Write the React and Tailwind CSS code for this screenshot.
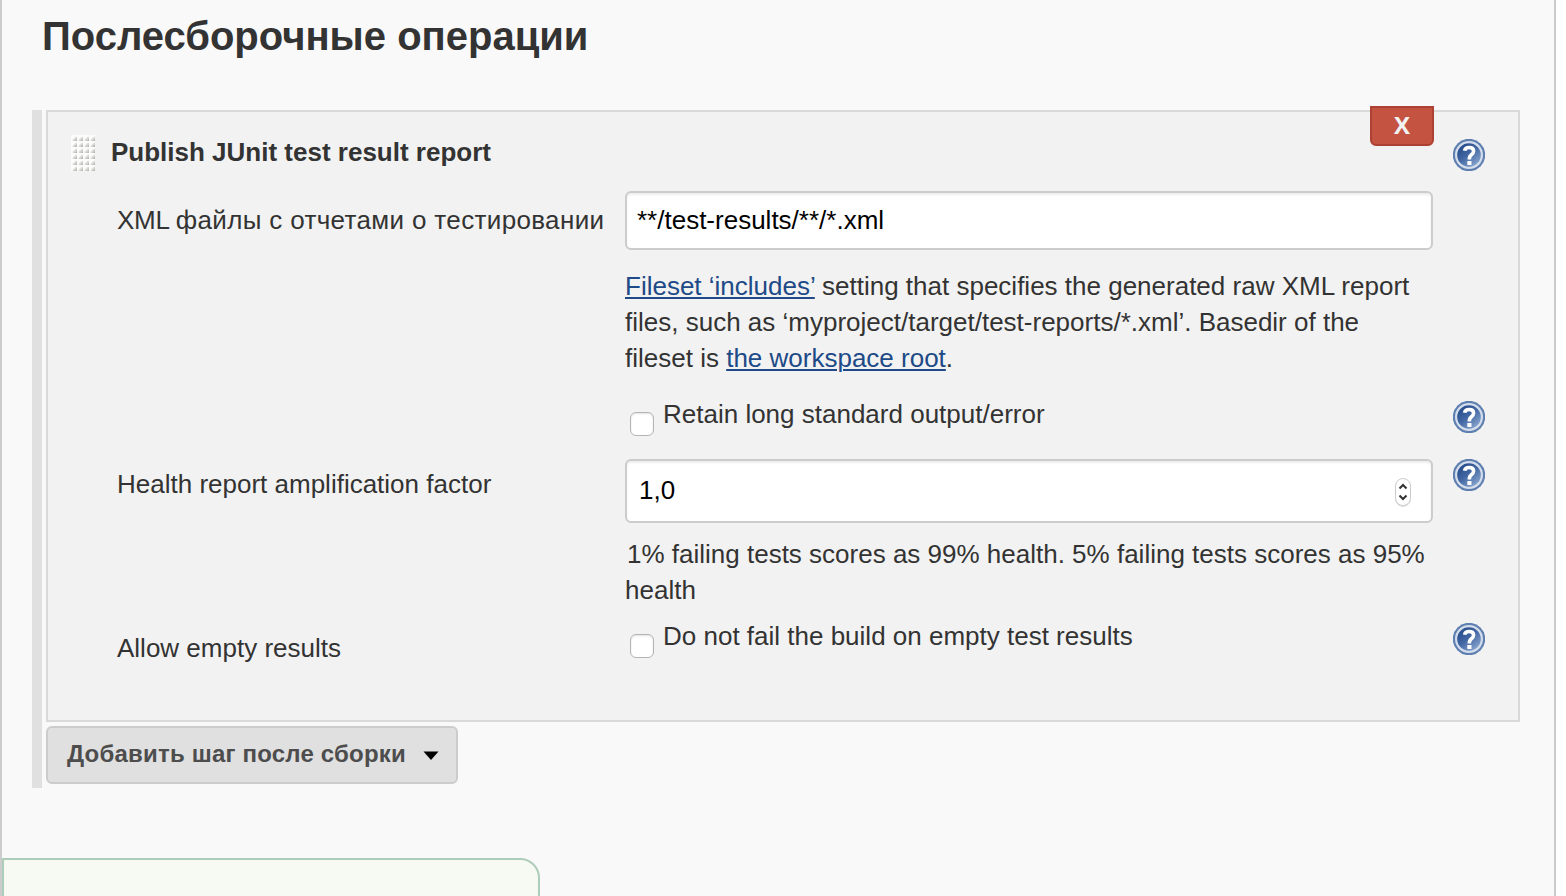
function HelpIcon({ className = "" }) {
  return (
    <svg viewBox="0 0 32 32" className={`block size-8 shrink-0 ${className}`} role="img" aria-label="?">
      <defs>
        <linearGradient id="helpFill" x1="0.15" y1="0.1" x2="0.85" y2="0.95">
          <stop offset="0" stopColor="#264a8a" />
          <stop offset="0.45" stopColor="#4267a3" />
          <stop offset="1" stopColor="#92add3" />
        </linearGradient>
      </defs>
      <circle cx="16" cy="16" r="16.2" fill="#5f7fb0" />
      <circle cx="16" cy="16" r="12.9" fill="url(#helpFill)" stroke="#d3ddeb" strokeWidth="2.2" />
      <path d="M11.6 11.8c.3-2.2 2.1-3.3 4.5-3.3 2.7 0 4.5 1.4 4.5 3.6 0 1.8-.9 2.7-2.2 3.7-1.5 1.1-2.1 2-2.1 4.6" fill="none" stroke="#fff" strokeWidth="3.6" />
      <rect x="14.3" y="22" width="4.2" height="4" rx=".6" fill="#fff" />
    </svg>
  );
}

function DragHandle() {
  return (
    <svg viewBox="0 0 24 36" className="block h-9 w-6 shrink-0">
      <defs>
        <linearGradient id="dot" x1="0.1" y1="0.1" x2="1" y2="1">
          <stop offset="0.15" stopColor="#f4f4f2" />
          <stop offset="0.6" stopColor="#cfcfcb" />
          <stop offset="1" stopColor="#a9a9a3" />
        </linearGradient>
        <pattern id="dots" width="6" height="6" patternUnits="userSpaceOnUse">
          <path d="M1.6 6V4.4L4.2 1.8H6V6Z" fill="url(#dot)" />
        </pattern>
      </defs>
      <rect width="24" height="36" fill="#fcfcfc" />
      <rect width="24" height="36" fill="url(#dots)" />
    </svg>
  );
}

function Checkbox({ label }) {
  return (
    <label className="flex h-9 pl-[5px]">
      <span className="mt-4 mr-[9px] size-6 shrink-0 rounded-[6px] border border-[#b4b4b4] bg-white shadow-[inset_0_1px_2px_rgba(0,0,0,0.12)]" />
      <span className="whitespace-nowrap">{label}</span>
    </label>
  );
}

function Row({ label, labelClass = "", help, children }) {
  return (
    <div className="flex">
      <div className="w-[508px] shrink-0 whitespace-nowrap">
        <span className={`block ${labelClass}`}>{label}</span>
      </div>
      <div className="w-[808px] shrink-0">{children}</div>
      <div className="ml-5">{help && <HelpIcon className={help} />}</div>
    </div>
  );
}

const fieldClass =
  "flex items-center rounded-[6px] border-2 border-[#cccccc] bg-white text-black shadow-[inset_0_2px_2px_rgba(0,0,0,0.07)]";
const linkClass = "text-[#204a87] underline decoration-2 underline-offset-[2px]";

export default function App() {
  return (
    <div className="h-[896px] w-[1566px] overflow-hidden bg-white font-['Liberation_Sans',Arial,sans-serif] text-[26px] leading-9 text-[#333333]">
      <main className="flex h-full w-[1556px] flex-col border-x-2 border-[#cccccc] bg-[#f9f9f9]">
        <h1 className="ml-10 pt-[11px] pb-px text-[40px] leading-[50px] font-bold whitespace-nowrap">
          <span>Послесборочные операции</span>
        </h1>

        <section className="mt-12 ml-[30px] flex h-[678px] shrink-0">
          <div className="mr-1 w-[10px] bg-[#e0e0e0]" />
          <div>
            <div className="h-[612px] w-[1474px] border-2 border-[#d9d9d9] bg-[#f2f2f2]">
              <header className="flex h-[79px]">
                <div className="mt-[23px] ml-[23px]">
                  <DragHandle />
                </div>
                <h2 className="mt-[22px] ml-4 w-[1259px] font-bold whitespace-nowrap">
                  <span>Publish JUnit test result report</span>
                </h2>
                <button className="-mt-[6px] h-10 w-16 shrink-0 rounded-b-[6px] border-2 border-[#ac4134] bg-[#c55341] pb-[2px] font-['Open_Sans',sans-serif] text-[24px] leading-none font-bold text-[#f2f2f2]">
                  X
                </button>
                <HelpIcon className="mt-[27px] ml-[19px]" />
              </header>

              <div className="pl-[69px]">
                <Row
                  label={
                    <>
                      <span className="tracking-[-0.25px]">XML </span>
                      <span className="tracking-[0.35px]">файлы с отчетами о тестировании</span>
                    </>
                  }
                  labelClass="mt-[11px]"
                >
                  <div className={`${fieldClass} h-[59px] pb-[2px] pl-[10px]`}>
                    <span>**/test-results/**/*.xml</span>
                  </div>
                  <p className="mt-[18px] whitespace-nowrap">
                    <span className="block"><a className={linkClass}>Fileset ‘includes’</a> setting that specifies the generated raw XML report</span>
                    <span className="block">files, such as ‘myproject/target/test-reports/*.xml’. Basedir of the</span>
                    <span className="block">fileset is <a className={linkClass}>the workspace root</a>.</span>
                  </p>
                </Row>
                <div className="h-5" />
                <Row help="mt-[5px]">
                  <Checkbox label="Retain long standard output/error" />
                </Row>
                <div className="h-[26px]" />
                <Row label="Health report amplification factor" labelClass="mt-[7px]" help="mt-0">
                  <div className={`${fieldClass} h-16 justify-between pr-[19px] pl-3`}>
                    <span className="pb-[2px]">1,0</span>
                    <svg viewBox="0 0 18 30" className="mt-[2px] h-[30px] w-[18px]">
                      <rect x="1.5" y="2.5" width="15" height="27" rx="7.5" fill="none" stroke="#dddddd" />
                      <rect x="1.5" y="1.5" width="15" height="27" rx="7.5" fill="#fff" stroke="#cccccc" />
                      <path d="M5.5 11.5 9 8l3.5 3.5M5.5 18.5 9 22l3.5-3.5" fill="none" stroke="#333" strokeWidth="2" />
                    </svg>
                  </div>
                  <p className="mt-[13px] whitespace-nowrap">
                    <span className="block pl-[2px]">1% failing tests scores as 99% health. 5% failing tests scores as 95%</span>
                    <span className="block">health</span>
                  </p>
                </Row>
                <div className="h-[10px]" />
                <Row label="Allow empty results" labelClass="mt-3" help="mt-[5px]">
                  <Checkbox label="Do not fail the build on empty test results" />
                </Row>
              </div>
            </div>

            <button className="mt-1 flex h-[58px] w-[412px] items-center rounded-[6px] border-2 border-[#cccccc] bg-[#e0e0e0] pl-[19px] text-[24px] font-bold whitespace-nowrap text-[#4d4d4d]">
              <span className="pb-[2px] tracking-[0.2px]">Добавить шаг после сборки</span>
              <svg viewBox="0 0 16 9" className="mt-px ml-[17px] h-[9px] w-4">
                <path d="M0.5 0.5H15.5L8 9Z" fill="#000" />
              </svg>
            </button>
          </div>
        </section>

        <div className="mt-[70px] h-[60px] w-[538px] shrink-0 rounded-tr-[20px] border-2 border-[#aeccba] bg-[#f7faf3]" />
      </main>
    </div>
  );
}
